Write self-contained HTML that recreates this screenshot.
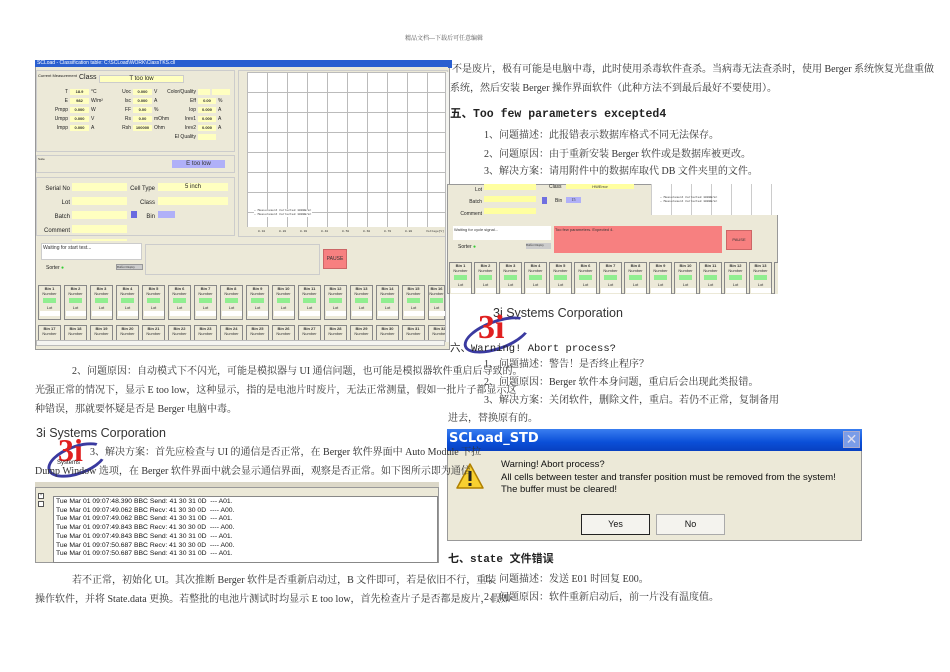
<!DOCTYPE html>
<html><head><meta charset="utf-8"><style>
*{margin:0;padding:0;box-sizing:border-box}
body{width:950px;height:672px;background:#fff;position:relative;overflow:hidden;font-family:"Liberation Serif","Noto Serif CJK SC",serif;color:#333}
.a{position:absolute;white-space:nowrap}
.t{font-size:10px;line-height:12px}
.s{font-family:"Liberation Sans",sans-serif}
.win{background:#ece9d8}
.bin{position:absolute;width:23px;height:35px;border:1px solid #888;background:#ece9d8;font-family:"Liberation Sans",sans-serif;font-size:4px;text-align:center;line-height:5px}
.bin b{display:block}
.bin i{display:block;margin:2px auto;width:13px;height:5px;background:#90ee90}
.bin u{display:block;margin:1px auto;width:20px;height:5px;background:#fff;text-decoration:none}
.lbl{font-family:"Liberation Sans",sans-serif;font-size:6px;color:#222}
.v{position:absolute;background:#ffffc0;font-family:"Liberation Sans",sans-serif;font-size:4px;font-weight:bold;text-align:center;line-height:6px;height:6px}
</style></head><body>
<div class="a" style="left:405px;top:33px;font-size:6px;color:#555">精品文档---下载后可任意编辑</div>

<!-- left screenshot -->
<div class="a win" style="left:35px;top:60px;width:415px;height:290px;border:1px solid #999"></div>
<div class="a" style="left:35px;top:60px;width:415px;height:7px;background:#2a5fd0"></div>
<div class="a" style="left:37px;top:60px;font-size:5px;color:#fff;font-family:'Liberation Sans',sans-serif">SCLoad - Classification table: C:\SCLoad\WORK\ClassTKS.cll</div>
<div class="a" style="left:36px;top:70px;width:199px;height:82px;border:1px solid #ccc"></div>
<div class="a lbl" style="left:38px;top:73px;font-size:4px">Current Measurement</div>
<div class="a lbl" style="left:79px;top:74px;font-size:7px">Class</div>
<div class="a lbl" style="left:99px;top:75px;width:85px;height:8px;background:#ffffc0;border:1px solid #ccc;text-align:center;font-size:6px;line-height:7px">T too low</div>
<div class="a lbl" style="left:48px;top:88px;width:20px;font-size:5px;line-height:9px;text-align:right">T<br>E<br>Pmpp<br>Umpp<br>Impp</div>
<div class="v" style="left:70px;top:89px;width:19px">18.9</div><div class="v" style="left:70px;top:98px;width:19px">982</div><div class="v" style="left:70px;top:107px;width:19px">0.000</div><div class="v" style="left:70px;top:116px;width:19px">0.000</div><div class="v" style="left:70px;top:125px;width:19px">0.000</div>
<div class="a lbl" style="left:91px;top:88px;font-size:5px;line-height:9px">°C<br>W/m²<br>W<br>V<br>A</div>
<div class="a lbl" style="left:112px;top:88px;width:19px;font-size:5px;line-height:9px;text-align:right">Uoc<br>Isc<br>FF<br>Rs<br>Rsh</div>
<div class="v" style="left:133px;top:89px;width:19px">0.000</div><div class="v" style="left:133px;top:98px;width:19px">0.000</div><div class="v" style="left:133px;top:107px;width:19px">0.00</div><div class="v" style="left:133px;top:116px;width:19px">0.00</div><div class="v" style="left:133px;top:125px;width:19px">100000</div>
<div class="a lbl" style="left:154px;top:88px;font-size:5px;line-height:9px">V<br>A<br>%<br>mOhm<br>Ohm</div>
<div class="a lbl" style="left:160px;top:88px;width:36px;font-size:5px;line-height:9px;text-align:right">Color/Quality<br>Eff<br>Iop<br>Irev1<br>Irev2<br>El Quality</div>
<div class="v" style="left:198px;top:89px;width:12px"></div><div class="v" style="left:212px;top:89px;width:18px"></div>
<div class="v" style="left:198px;top:98px;width:18px">0.00</div><div class="v" style="left:198px;top:107px;width:18px">0.000</div><div class="v" style="left:198px;top:116px;width:18px">0.000</div><div class="v" style="left:198px;top:125px;width:18px">0.000</div><div class="v" style="left:198px;top:134px;width:18px"></div>
<div class="a lbl" style="left:218px;top:97px;font-size:5px;line-height:9px">%<br>A<br>A<br>A</div>
<div class="a" style="left:36px;top:155px;width:199px;height:18px;border:1px solid #ccc"></div>
<div class="a lbl" style="left:38px;top:157px;font-size:3px">Suite</div>
<div class="a" style="left:172px;top:160px;width:53px;height:8px;background:#b0b0f8;font-size:6px;text-align:center;line-height:8px;font-family:'Liberation Sans',sans-serif">E too low</div>
<div class="a" style="left:36px;top:177px;width:199px;height:59px;border:1px solid #ccc"></div>
<div class="a lbl" style="left:40px;top:182px;width:30px;line-height:14px;text-align:right;font-size:6px">Serial No<br>Lot<br>Batch<br>Comment</div>
<div class="a" style="left:72px;top:183px;width:55px;height:58px;background:repeating-linear-gradient(#ffffc0 0 8px,transparent 8px 14px)"></div>
<div class="a" style="left:158px;top:183px;width:70px;height:22px;background:repeating-linear-gradient(#ffffc0 0 8px,transparent 8px 14px)"></div>
<div class="a lbl" style="left:128px;top:182px;width:27px;text-align:right;font-size:6px;line-height:14px">Cell Type<br>Class<br>Bin</div>
<div class="a lbl" style="left:185px;top:184px;font-size:6px">5 inch</div>
<div class="a" style="left:131px;top:211px;width:6px;height:7px;background:#6a6ae0"></div>
<div class="a" style="left:158px;top:211px;width:17px;height:7px;background:#b0b0f8"></div>
<div class="a" style="left:238px;top:70px;width:210px;height:167px;border:1px solid #ccc"></div>
<div class="a" style="left:247px;top:72px;width:199px;height:155px;background:#fff;background-image:linear-gradient(90deg,#bbb 1px,transparent 1px),linear-gradient(#bbb 1px,transparent 1px);background-size:20px 20px"></div>
<div class="a" style="left:254px;top:209px;font-size:3px;font-family:'Liberation Mono',monospace;line-height:4px;background:#fff">— Measurement Corrected 1000W/m²<br>— Measurement Corrected 1000W/m²</div>
<div class="a" style="left:258px;top:230px;font-size:3px;font-family:'Liberation Mono',monospace;word-spacing:12px">0.10 0.20 0.30 0.40 0.50 0.60 0.70 0.80 Voltage[V]</div>
<div class="a" style="left:41px;top:243px;width:101px;height:17px;background:#fff;border:1px solid #ccc;font-size:5px;font-family:'Liberation Sans',sans-serif;padding:1px">Waiting for start test...</div>
<div class="a lbl" style="left:46px;top:265px;font-size:5px">Sorter <span style="color:#3c3">●</span></div>
<div class="a" style="left:116px;top:264px;width:27px;height:6px;background:#ccc;border:1px solid #999;font-size:3px">Buffer Display</div>
<div class="a" style="left:145px;top:244px;width:175px;height:31px;border:1px solid #ccc"></div>
<div class="a" style="left:323px;top:249px;width:24px;height:20px;background:#f78080;border:1px solid #c66;font-size:5px;line-height:18px;text-align:center;font-family:'Liberation Sans',sans-serif">PAUSE</div>
<div class="a" style="left:38px;top:285px">
<div class="bin" style="left:0"><b>Bin 1</b>Number<i></i>Lot<u></u></div><div class="bin" style="left:26px"><b>Bin 2</b>Number<i></i>Lot<u></u></div><div class="bin" style="left:52px"><b>Bin 3</b>Number<i></i>Lot<u></u></div><div class="bin" style="left:78px"><b>Bin 4</b>Number<i></i>Lot<u></u></div><div class="bin" style="left:104px"><b>Bin 5</b>Number<i></i>Lot<u></u></div><div class="bin" style="left:130px"><b>Bin 6</b>Number<i></i>Lot<u></u></div><div class="bin" style="left:156px"><b>Bin 7</b>Number<i></i>Lot<u></u></div><div class="bin" style="left:182px"><b>Bin 8</b>Number<i></i>Lot<u></u></div><div class="bin" style="left:208px"><b>Bin 9</b>Number<i></i>Lot<u></u></div><div class="bin" style="left:234px"><b>Bin 10</b>Number<i></i>Lot<u></u></div><div class="bin" style="left:260px"><b>Bin 11</b>Number<i></i>Lot<u></u></div><div class="bin" style="left:286px"><b>Bin 12</b>Number<i></i>Lot<u></u></div><div class="bin" style="left:312px"><b>Bin 13</b>Number<i></i>Lot<u></u></div><div class="bin" style="left:338px"><b>Bin 14</b>Number<i></i>Lot<u></u></div><div class="bin" style="left:364px"><b>Bin 15</b>Number<i></i>Lot<u></u></div><div class="bin" style="left:390px;width:17px"><b>Bin 16</b>Number<i></i>Lot<u></u></div>
</div>
<div class="a" style="left:38px;top:325px;height:15px;width:407px;overflow:hidden">
<div class="bin" style="left:0"><b>Bin 17</b>Number</div><div class="bin" style="left:26px"><b>Bin 18</b>Number</div><div class="bin" style="left:52px"><b>Bin 19</b>Number</div><div class="bin" style="left:78px"><b>Bin 20</b>Number</div><div class="bin" style="left:104px"><b>Bin 21</b>Number</div><div class="bin" style="left:130px"><b>Bin 22</b>Number</div><div class="bin" style="left:156px"><b>Bin 23</b>Number</div><div class="bin" style="left:182px"><b>Bin 24</b>Number</div><div class="bin" style="left:208px"><b>Bin 25</b>Number</div><div class="bin" style="left:234px"><b>Bin 26</b>Number</div><div class="bin" style="left:260px"><b>Bin 27</b>Number</div><div class="bin" style="left:286px"><b>Bin 28</b>Number</div><div class="bin" style="left:312px"><b>Bin 29</b>Number</div><div class="bin" style="left:338px"><b>Bin 30</b>Number</div><div class="bin" style="left:364px"><b>Bin 31</b>Number</div><div class="bin" style="left:390px"><b>Bin 32</b>Number</div>
</div>
<div class="a" style="left:36px;top:340px;width:409px;height:6px;background:#f4f4f0;border:1px solid #bbb"></div>
<div class="a" style="left:445px;top:72px;width:4px;height:270px;background:#f4f4f0;border-left:1px solid #bbb"></div>
<div class="a" style="left:448px;top:60px;width:4px;height:8px;background:#2a5fd0"></div>

<!-- right text -->
<div class="a t" style="left:452px;top:64px">不是废片，极有可能是电脑中毒，此时使用杀毒软件查杀。当病毒无法查杀时，使用 Berger 系统恢复光盘重做</div>
<div class="a t" style="left:450px;top:83px">系统，然后安装 Berger 操作界面软件（此种方法不到最后最好不要使用）。</div>
<div class="a" style="left:450px;top:105px;font-size:11.5px;font-weight:bold;font-family:'Liberation Mono','Noto Sans CJK SC',monospace;color:#222">五、Too few parameters excepted4</div>
<div class="a t" style="left:484px;top:130px">1、问题描述：此报错表示数据库格式不同无法保存。</div>
<div class="a t" style="left:484px;top:149px">2、问题原因：由于重新安装 Berger 软件或是数据库被更改。</div>
<div class="a t" style="left:484px;top:166px">3、解决方案：请用附件中的数据库取代 DB 文件夹里的文件。</div>

<!-- right screenshot -->
<div class="a win" style="left:447px;top:184px;width:331px;height:110px;border:1px solid #999"></div>
<div class="a lbl" style="left:452px;top:184px;width:30px;font-size:5px;line-height:12px;text-align:right">Lot<br>Batch<br>Comment</div>
<div class="a" style="left:484px;top:184px;width:52px;height:32px;background:repeating-linear-gradient(#ffffa0 0 6px,transparent 6px 12px)"></div>
<div class="a lbl" style="left:549px;top:184px;font-size:5px">Class</div>
<div class="a" style="left:566px;top:184px;width:68px;height:5px;background:#ffffa0;font-size:4px;text-align:center;font-family:'Liberation Sans',sans-serif">HWError</div>
<div class="a" style="left:542px;top:197px;width:5px;height:7px;background:#7070e0"></div>
<div class="a lbl" style="left:555px;top:198px;font-size:5px">Bin</div>
<div class="a" style="left:566px;top:197px;width:15px;height:6px;background:#b0b0f8;font-size:4px;text-align:center">15</div>
<div class="a" style="left:651px;top:184px;width:127px;height:31px;background:#fff;background-image:linear-gradient(90deg,#ccc 1px,transparent 1px);background-size:20px 20px"></div>
<div class="a" style="left:660px;top:196px;font-size:3px;font-family:'Liberation Mono',monospace;line-height:4px">— Measurement Corrected 1000W/m²<br>— Measurement Corrected 1000W/m²</div>
<div class="a" style="left:453px;top:226px;width:98px;height:14px;background:#fff;font-size:4px;font-family:'Liberation Sans',sans-serif;padding:1px">Waiting for cycle signal...</div>
<div class="a lbl" style="left:458px;top:244px;font-size:5px">Sorter <span style="color:#3c3">●</span></div>
<div class="a" style="left:526px;top:243px;width:25px;height:6px;background:#ccc;font-size:3px">Buffer Display</div>
<div class="a" style="left:554px;top:226px;width:168px;height:27px;background:#f78080;font-size:4px;font-family:'Liberation Sans',sans-serif;padding:1px">Too few parameters. Expected 4.</div>
<div class="a" style="left:726px;top:230px;width:26px;height:20px;background:#f78080;border:1px solid #c66;font-size:4px;line-height:18px;text-align:center;font-family:'Liberation Sans',sans-serif">PAUSE</div>
<div class="a" style="left:449px;top:262px;width:329px;height:32px;overflow:hidden">
<div class="bin" style="left:0"><b>Bin 1</b>Number<i></i>Lot<u></u></div><div class="bin" style="left:25px"><b>Bin 2</b>Number<i></i>Lot<u></u></div><div class="bin" style="left:50px"><b>Bin 3</b>Number<i></i>Lot<u></u></div><div class="bin" style="left:75px"><b>Bin 4</b>Number<i></i>Lot<u></u></div><div class="bin" style="left:100px"><b>Bin 5</b>Number<i></i>Lot<u></u></div><div class="bin" style="left:125px"><b>Bin 6</b>Number<i></i>Lot<u></u></div><div class="bin" style="left:150px"><b>Bin 7</b>Number<i></i>Lot<u></u></div><div class="bin" style="left:175px"><b>Bin 8</b>Number<i></i>Lot<u></u></div><div class="bin" style="left:200px"><b>Bin 9</b>Number<i></i>Lot<u></u></div><div class="bin" style="left:225px"><b>Bin 10</b>Number<i></i>Lot<u></u></div><div class="bin" style="left:250px"><b>Bin 11</b>Number<i></i>Lot<u></u></div><div class="bin" style="left:275px"><b>Bin 12</b>Number<i></i>Lot<u></u></div><div class="bin" style="left:300px"><b>Bin 13</b>Number<i></i>Lot<u></u></div><div class="bin" style="left:325px"><b>Bin 14</b></div>
</div>

<!-- logo right -->
<div class="a s" style="left:493px;top:306px;font-size:12.5px;color:#333">3i Systems Corporation</div>
<div class="a" style="left:462px;top:320px;width:70px;height:30px;border:3px solid #3a3aa0;border-radius:50%;transform:rotate(-20deg);border-right-color:transparent;border-bottom-color:#3a3aa0"></div>
<div class="a" style="left:478px;top:310px;font-size:34px;font-weight:bold;color:#e02020;font-family:'Liberation Serif',serif;line-height:36px">3i</div>
<div class="a" style="left:450px;top:340px;font-size:10.5px;font-family:'Liberation Mono','Noto Sans CJK SC',monospace;color:#222">六、Warning! Abort process?</div>
<div class="a t" style="left:484px;top:359px">1、问题描述：警告！是否终止程序？</div>
<div class="a t" style="left:484px;top:377px">2、问题原因：Berger 软件本身问题，重启后会出现此类报错。</div>
<div class="a t" style="left:484px;top:395px">3、解决方案：关闭软件，删除文件，重启。若仍不正常，复制备用</div>
<div class="a t" style="left:448px;top:413px">进去，替换原有的。</div>

<!-- dialog -->
<div class="a" style="left:447px;top:429px;width:415px;height:112px;background:#ece9d8;border:1px solid #999"></div>
<div class="a" style="left:447px;top:429px;width:415px;height:22px;background:linear-gradient(#3a7ef0,#0a4fd8 60%,#0840c0)"></div>
<div class="a" style="left:449px;top:431px;font-size:13px;font-weight:bold;color:#fff;font-family:'DejaVu Sans',sans-serif">SCLoad_STD</div>
<div class="a" style="left:843px;top:431px;width:17px;height:17px;background:#7a9ce8;border:1px solid #aac;color:#dde;font-size:14px;line-height:15px;text-align:center;font-family:'Liberation Sans',sans-serif">✕</div>
<svg class="a" style="left:455px;top:462px" width="30" height="28"><polygon points="15,2 28,26 2,26" fill="#f8d030" stroke="#b08000" stroke-width="1.5" stroke-linejoin="round"/><rect x="13.5" y="9" width="3" height="10" fill="#222"/><rect x="13.5" y="21" width="3" height="3" fill="#222"/></svg>
<div class="a s" style="left:501px;top:459px;font-size:9.5px;line-height:12.5px;color:#111">Warning! Abort process?<br>All cells between tester and transfer position must be removed from the system!<br>The buffer must be cleared!</div>
<div class="a s" style="left:581px;top:514px;width:69px;height:21px;border:1px solid #222;background:#f4f3ee;font-size:9px;line-height:19px;text-align:center;color:#111">Yes</div>
<div class="a s" style="left:656px;top:514px;width:69px;height:21px;border:1px solid #aaa;background:#f4f3ee;font-size:9px;line-height:19px;text-align:center;color:#111">No</div>
<div class="a" style="left:448px;top:550px;font-size:11px;font-weight:bold;font-family:'Liberation Mono','Noto Sans CJK SC',monospace;color:#222">七、state 文件错误</div>
<div class="a t" style="left:484px;top:574px">1、问题描述：发送 E01 时回复 E00。</div>
<div class="a t" style="left:484px;top:592px">2、问题原因：软件重新启动后，前一片没有温度值。</div>

<!-- left text -->
<div class="a t" style="left:72px;top:366px">2、问题原因：自动模式下不闪光，可能是模拟器与 UI 通信问题，也可能是模拟器软件重启后导致的。</div>
<div class="a t" style="left:35px;top:385px">光强正常的情况下，显示 E too low，这种显示，指的是电池片时废片，无法正常测量，假如一批片子都显示这</div>
<div class="a t" style="left:35px;top:404px">种错误，那就要怀疑是否是 Berger 电脑中毒。</div>
<div class="a s" style="left:36px;top:426px;font-size:12.5px;color:#333">3i Systems Corporation</div>
<div class="a" style="left:46px;top:445px;width:62px;height:30px;border:3px solid #3a3aa0;border-radius:50%;transform:rotate(-20deg);border-right-color:transparent"></div>
<div class="a" style="left:58px;top:433px;font-size:32px;font-weight:bold;color:#e02020;line-height:34px">3i</div>
<div class="a s" style="left:57px;top:460px;font-size:6px;color:#222">Systems</div>
<div class="a t" style="left:90px;top:447px">3、解决方案：首先应检查与 UI 的通信是否正常，在 Berger 软件界面中 Auto Module 下拉</div>
<div class="a t" style="left:35px;top:466px">Dump Window 选项，在 Berger 软件界面中就会显示通信界面，观察是否正常。如下图所示即为通信</div>
<div class="a" style="left:35px;top:482px;width:404px;height:81px;background:#ece9d8;border:1px solid #999"></div>
<div class="a" style="left:35px;top:482px;width:404px;height:6px;background:#dcd8c8;border-bottom:1px solid #999"></div>
<div class="a" style="left:38px;top:493px;width:6px;height:6px;border:1px solid #555;font-size:5px;line-height:4px;text-align:center;background:#fff">×</div>
<div class="a" style="left:38px;top:501px;width:6px;height:6px;border:1px solid #555;background:#fff"></div>
<div class="a s" style="left:53px;top:496px;width:385px;height:67px;background:#fff;border:1px solid #888;font-size:6.8px;line-height:8.7px;padding:1px 2px;color:#111">Tue Mar 01 09:07:48.390 BBC Send: 41 30 31 0D &nbsp;--- A01.<br>Tue Mar 01 09:07:49.062 BBC Recv: 41 30 30 0D &nbsp;---- A00.<br>Tue Mar 01 09:07:49.062 BBC Send: 41 30 31 0D &nbsp;--- A01.<br>Tue Mar 01 09:07:49.843 BBC Recv: 41 30 30 0D &nbsp;---- A00.<br>Tue Mar 01 09:07:49.843 BBC Send: 41 30 31 0D &nbsp;--- A01.<br>Tue Mar 01 09:07:50.687 BBC Recv: 41 30 30 0D &nbsp;---- A00.<br>Tue Mar 01 09:07:50.687 BBC Send: 41 30 31 0D &nbsp;--- A01.</div>
<div class="a t" style="left:72px;top:575px">若不正常，初始化 UI。其次推断 Berger 软件是否重新启动过，B 文件即可，若是依旧不行，重装</div>
<div class="a t" style="left:35px;top:594px">操作软件，并将 State.data 更换。若整批的电池片测试时均显示 E too low，首先检查片子是否都是废片，假如</div>
</body></html>
